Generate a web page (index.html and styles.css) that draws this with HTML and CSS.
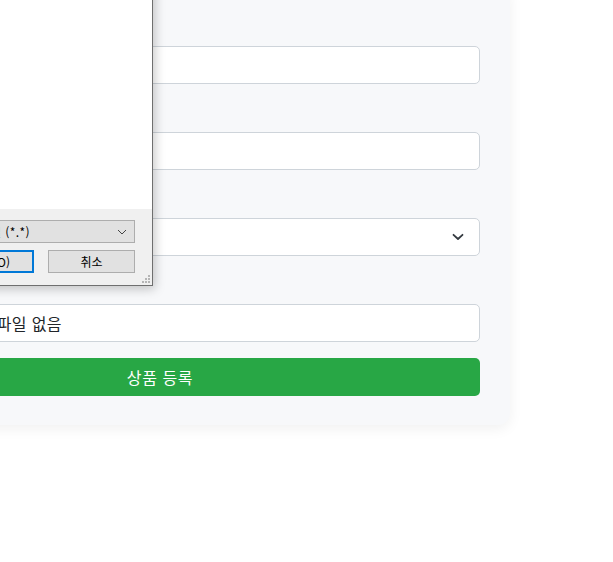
FILE: index.html
```html
<!DOCTYPE html>
<html lang="ko">
<head>
<meta charset="utf-8">
<title>상품 등록</title>
<link rel="stylesheet" href="styles.css">
</head>
<body>
<div class="page">
  <form class="card">
    <div class="group">
      <label class="label">상품명</label>
      <div class="input"></div>
    </div>
    <div class="group">
      <label class="label">가격</label>
      <div class="input"></div>
    </div>
    <div class="group">
      <label class="label">카테고리</label>
      <div class="input select">
        <span class="select-text">카테고리 선택</span>
        <svg class="chev" width="12" height="8" viewBox="0 0 12 8"><path d="M1.5 1.8 6 6 10.5 1.8" fill="none" stroke="#343a40" stroke-width="1.8" stroke-linecap="round" stroke-linejoin="round"/></svg>
      </div>
    </div>
    <div class="group">
      <label class="label">상품 이미지</label>
      <div class="input file"><span class="file-text">선택된 파일 없음</span></div>
    </div>
    <button type="button" class="submit">상품 등록</button>
  </form>

  <div class="dialog">
    <div class="dlg-body"></div>
    <div class="dlg-footer">
      <div class="combo">
        <span class="combo-text">모든 파일 (*.*)</span>
        <svg class="combo-chev" width="10" height="6" viewBox="0 0 10 6"><path d="M1 1 5 5 9 1" fill="none" stroke="#444" stroke-width="1"/></svg>
      </div>
      <div class="dlg-buttons">
        <span class="dbtn primary">열기(O)</span>
        <span class="dbtn">취소</span>
      </div>
      <svg class="grip" width="8" height="8" viewBox="0 0 8 8" fill="#b5b5b5"><rect x="6" y="0" width="2" height="2"/><rect x="3" y="3" width="2" height="2"/><rect x="6" y="3" width="2" height="2"/><rect x="0" y="6" width="2" height="2"/><rect x="3" y="6" width="2" height="2"/><rect x="6" y="6" width="2" height="2"/></svg>
    </div>
  </div>
</div>
</body>
</html>
```

FILE: styles.css
```css
* { box-sizing: border-box; }
html, body { margin: 0; padding: 0; background: #fff; overflow: hidden; }
body { font-family: "Noto Sans CJK KR", "Noto Sans", sans-serif; }

.page {
  position: relative;
  display: flow-root;
  width: 613px;
  height: 562px;
}

.card {
  width: 700px;
  margin-left: -190px;
  margin-top: -16px;
  padding: 30px 30px 29px;
  background: #f7f8fa;
  border-radius: 12px;
  box-shadow: 0 4px 14px rgba(0, 0, 0, 0.06);
}

.group { margin-bottom: 16px; }

.label {
  display: block;
  font-size: 16px;
  line-height: 24px;
  margin-bottom: 8px;
  color: #333;
}

.input {
  height: 38px;
  background: #fff;
  border: 1px solid #ced4da;
  border-radius: 5px;
  display: flex;
  align-items: center;
  padding: 0 12px;
  font-size: 16px;
  color: #212529;
}

.select { justify-content: space-between; padding-right: 15px; }
.select-text { color: #212529; }
.chev { display: block; }

.file { padding: 0; }
.file-text { margin-left: 106px; line-height: 1; letter-spacing: 0.3px; }

.submit {
  display: block;
  width: 100%;
  height: 38px;
  border: 0;
  border-radius: 5px;
  background: #28a745;
  color: #fff;
  font-family: "Noto Sans CJK KR", sans-serif;
  font-size: 16px;
  letter-spacing: 0.6px;
  cursor: pointer;
}

/* native file dialog overlay */
.dialog {
  position: absolute;
  left: -400px;
  top: -300px;
  width: 553px;
  height: 586px;
  background: #fff;
  border: 1px solid #6f6f6f;
  box-shadow: 2px 3px 10px rgba(0, 0, 0, 0.22);
  display: flex;
  flex-direction: column;
  font-family: "Noto Sans CJK KR", sans-serif;
  font-size: 12px;
  color: #000;
}

.dlg-body { flex: 1; background: #fff; }

.dlg-footer {
  position: relative;
  height: 76px;
  background: #f0f0f0;
  padding: 11px 17px 0 0;
  display: flex;
  flex-direction: column;
  align-items: flex-end;
  gap: 7px;
}

.combo {
  width: 300px;
  height: 23px;
  background: #e1e1e1;
  border: 1px solid #adadad;
  display: flex;
  align-items: center;
  justify-content: space-between;
  padding: 0 7px 0 0;
}
.combo-text { margin-left: 116px; white-space: nowrap; line-height: 1; letter-spacing: 0.4px; }
.combo-chev { display: block; }

.dlg-buttons { display: flex; gap: 14px; }

.dbtn {
  width: 87px;
  height: 23px;
  background: #e1e1e1;
  border: 1px solid #adadad;
  display: flex;
  align-items: center;
  justify-content: center;
  line-height: 1;
}
.dbtn.primary { border: 2px solid #0078d7; }

.grip {
  position: absolute;
  right: 2px;
  bottom: 2px;
}
```
